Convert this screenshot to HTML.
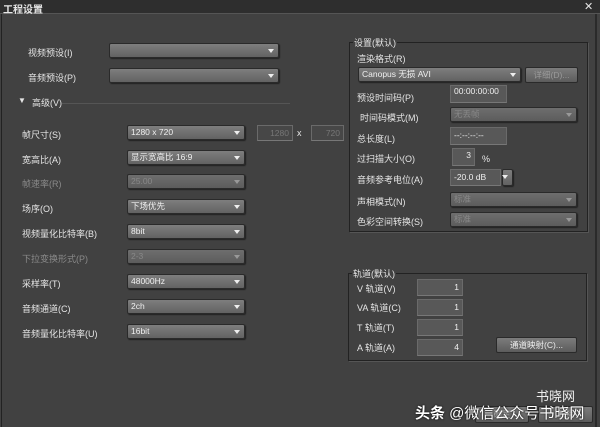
<!DOCTYPE html>
<html><head><meta charset="utf-8"><style>
*{margin:0;padding:0;box-sizing:border-box}
body{width:600px;height:427px;background:#414141;font-family:"Liberation Sans","Noto Sans CJK SC",sans-serif;font-size:9px;color:#e6e6e6;position:relative;overflow:hidden}
.a{position:absolute;white-space:nowrap}
.t{position:absolute;top:0;left:0;width:600px;height:14px;background:#2e2e2e;border-bottom:1px solid #555}
.cb{position:absolute;height:15px;background:linear-gradient(#7e7e7e,#626262);border:1px solid #2a2a2a;border-radius:2px;box-shadow:1px 1px 1px #222;padding-left:3px;line-height:13px;font-size:8.5px;color:#f0f0f0}
.cb:after{content:"";position:absolute;right:4px;top:5px;border:3px solid transparent;border-top:4px solid #eee}
.dis{color:#888;background:linear-gradient(#6e6e6e,#5c5c5c)}
.dis:after{border-top-color:#999}
.f{position:absolute;background:#585858;border:1px solid #6a6a6a;border-bottom-color:#777;color:#eee;font-size:8.5px;line-height:14px;padding:0 3px}
.g{position:absolute;border:1px solid #222;box-shadow:1px 1px 0 #555}
.dl{color:#8a8a8a}
.btn{position:absolute;height:16px;background:linear-gradient(#7c7c7c,#5c5c5c);border:1px solid #2a2a2a;border-radius:2px;text-align:center;line-height:14px;font-size:8.5px;color:#eee}
</style></head><body>
<div class="t"></div>
<div class="a" style="left:3px;top:1px;font-size:10px;font-weight:bold">工程设置</div>
<div class="a" style="left:584px;top:0;font-size:11px">✕</div>
<div class="a" style="left:1px;top:14px;width:1px;height:413px;background:#222"></div>
<div class="a" style="left:595px;top:14px;width:2px;height:413px;background:#2a2a2a"></div>

<div class="a" style="left:28px;top:46px">视频预设(I)</div>
<div class="cb" style="left:109px;top:43px;width:170px"></div>
<div class="a" style="left:28px;top:71px">音频预设(P)</div>
<div class="cb" style="left:109px;top:68px;width:170px"></div>
<div class="a" style="left:18px;top:96px;font-size:8px">▼</div>
<div class="a" style="left:32px;top:96px">高级(V)</div>
<div class="a" style="left:62px;top:103px;width:228px;height:1px;background:#1e1e1e;border-bottom:1px solid #555"></div>

<div class="a" style="left:22px;top:128px">帧尺寸(S)</div>
<div class="cb" style="left:127px;top:125px;width:118px">1280 x 720</div>
<div class="f" style="left:257px;top:125px;width:36px;height:16px;text-align:right;color:#777;background:#474747">1280</div>
<div class="a" style="left:297px;top:128px">x</div>
<div class="f" style="left:311px;top:125px;width:33px;height:16px;text-align:right;color:#777;background:#474747">720</div>

<div class="a" style="left:22px;top:153px">宽高比(A)</div>
<div class="cb" style="left:127px;top:150px;width:118px">显示宽高比 16:9</div>
<div class="a dl" style="left:22px;top:177px">帧速率(R)</div>
<div class="cb dis" style="left:127px;top:174px;width:118px">25.00</div>
<div class="a" style="left:22px;top:202px">场序(O)</div>
<div class="cb" style="left:127px;top:199px;width:118px">下场优先</div>
<div class="a" style="left:22px;top:227px">视频量化比特率(B)</div>
<div class="cb" style="left:127px;top:224px;width:118px">8bit</div>
<div class="a dl" style="left:22px;top:252px">下拉变换形式(P)</div>
<div class="cb dis" style="left:127px;top:249px;width:118px">2-3</div>
<div class="a" style="left:22px;top:277px">采样率(T)</div>
<div class="cb" style="left:127px;top:274px;width:118px">48000Hz</div>
<div class="a" style="left:22px;top:302px">音频通道(C)</div>
<div class="cb" style="left:127px;top:299px;width:118px">2ch</div>
<div class="a" style="left:22px;top:327px">音频量化比特率(U)</div>
<div class="cb" style="left:127px;top:324px;width:118px">16bit</div>

<div class="g" style="left:349px;top:42px;width:239px;height:190px"></div>
<div class="a" style="left:353px;top:36px;background:#414141;padding:0 1px">设置(默认)</div>
<div class="a" style="left:357px;top:52px">渲染格式(R)</div>
<div class="cb" style="left:358px;top:67px;width:163px">Canopus 无损 AVI</div>
<div class="btn" style="left:525px;top:67px;width:53px;color:#999">详细(D)...</div>
<div class="a" style="left:357px;top:91px">预设时间码(P)</div>
<div class="f" style="left:450px;top:85px;width:57px;height:18px;line-height:11px">00:00:00:00</div>
<div class="a" style="left:360px;top:111px">时间码模式(M)</div>
<div class="cb dis" style="left:450px;top:107px;width:127px">无丢帧</div>
<div class="a" style="left:357px;top:132px">总长度(L)</div>
<div class="f" style="left:450px;top:127px;width:57px;height:18px">--:--:--:--</div>
<div class="a" style="left:357px;top:152px">过扫描大小(O)</div>
<div class="f" style="left:452px;top:148px;width:23px;height:18px;text-align:right;line-height:12px">3</div>
<div class="a" style="left:482px;top:154px">%</div>
<div class="a" style="left:357px;top:173px">音频参考电位(A)</div>
<div class="f" style="left:450px;top:169px;width:51px;height:17px">-20.0 dB</div>
<div class="cb" style="left:502px;top:169px;width:11px;height:17px;padding:0"></div>
<div class="a" style="left:357px;top:195px">声相模式(N)</div>
<div class="cb dis" style="left:450px;top:192px;width:127px">标准</div>
<div class="a" style="left:357px;top:215px">色彩空间转换(S)</div>
<div class="cb dis" style="left:450px;top:212px;width:127px">标准</div>

<div class="g" style="left:348px;top:273px;width:239px;height:88px"></div>
<div class="a" style="left:352px;top:267px;background:#414141;padding:0 1px">轨道(默认)</div>
<div class="a" style="left:357px;top:282px">V 轨道(V)</div>
<div class="f" style="left:417px;top:279px;width:46px;height:17px;text-align:right">1</div>
<div class="a" style="left:357px;top:301px">VA 轨道(C)</div>
<div class="f" style="left:417px;top:299px;width:46px;height:17px;text-align:right">1</div>
<div class="a" style="left:357px;top:321px">T 轨道(T)</div>
<div class="f" style="left:417px;top:319px;width:46px;height:17px;text-align:right">1</div>
<div class="a" style="left:357px;top:341px">A 轨道(A)</div>
<div class="f" style="left:417px;top:339px;width:46px;height:17px;text-align:right">4</div>
<div class="btn" style="left:496px;top:337px;width:81px">通道映射(C)...</div>

<div class="btn" style="left:475px;top:406px;width:54px;height:17px;color:#aaa">确定</div>
<div class="btn" style="left:538px;top:406px;width:55px;height:17px;color:#aaa">取消</div>
<div class="a" style="left:415px;top:402px;font-size:15px;color:#fff;font-weight:bold;text-shadow:0 0 2px #000">头条 <span style="font-weight:normal">@微信公众号书晓网</span></div>
<div class="a" style="left:536px;top:386px;font-size:13px;color:#eee">书晓网</div>
</body></html>
